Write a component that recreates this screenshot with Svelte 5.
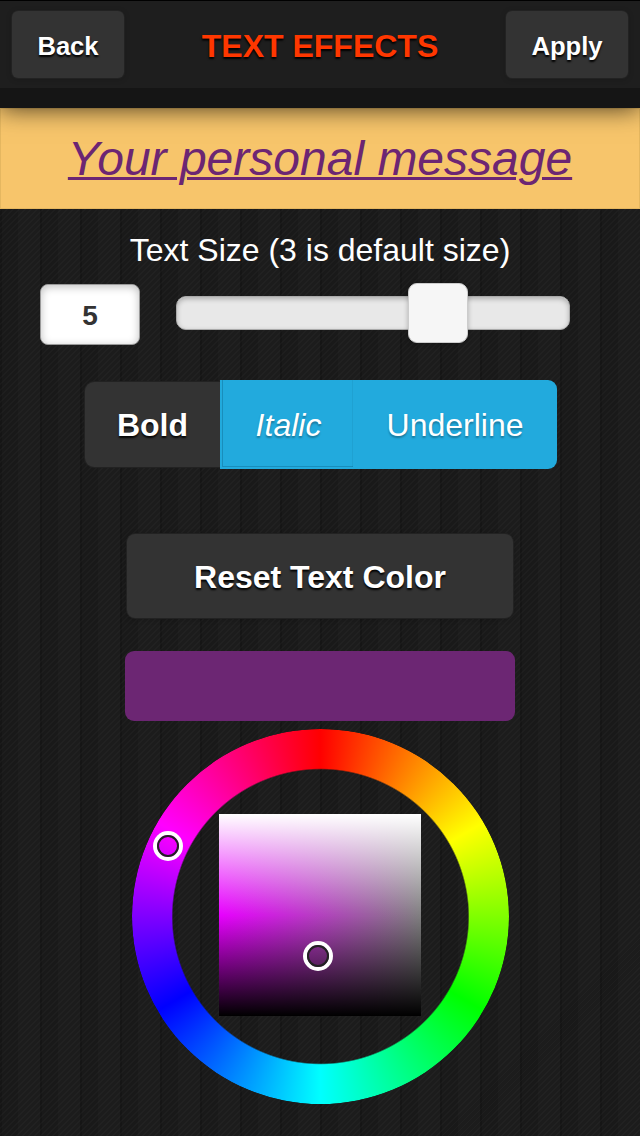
<script>
    let size = $state(5);
    let bold = $state(false);
    let italic = $state(true);
    let underline = $state(true);
    let color = $state('#6c2673');

    const defaultColor = '#ffffff';
    const maxSize = 7;
    const hue = { x: 36, y: 117 };
    const shade = { x: 99, y: 142 };

    // left edge of the 60px handle, the track is 394px wide
    let handleLeft = $derived(((size - 1) / (maxSize - 1)) * 394 - 31.7);
</script>

<div class="page">
    <header>
        <div class="toolbar">
            <button class="btn small">Back</button>
            <h1>TEXT EFFECTS</h1>
            <button class="btn small">Apply</button>
        </div>
    </header>

    <div class="preview">
        <span class:bold class:italic class:underline style="color: {color}">Your personal message</span>
    </div>

    <div class="label">Text Size (3 is default size)</div>
    <div class="size-row">
        <input type="text" bind:value={size} />
        <div class="track">
            <div class="handle" style="left: {handleLeft}px"></div>
        </div>
    </div>

    <div class="group">
        <button class="toggle b" class:active={bold} onclick={() => bold = !bold}>Bold</button>
        <button class="toggle i" class:active={italic} onclick={() => italic = !italic}>Italic</button>
        <button class="toggle u" class:active={underline} onclick={() => underline = !underline}>Underline</button>
    </div>

    <button class="btn reset" onclick={() => color = defaultColor}>Reset Text Color</button>

    <div class="swatch" style="background: {color}"></div>

    <div class="picker">
        <div class="wheel"></div>
        <div class="square">
            <span class="marker" style="left: {shade.x}px; top: {shade.y}px"></span>
        </div>
        <span class="marker" style="left: {hue.x}px; top: {hue.y}px"></span>
    </div>
</div>

<style>
    :global(body) {
        background: #1b1b1b;
    }

    .page {
        width: 640px;
        height: 1136px;
        overflow: hidden;
        display: flex;
        flex-direction: column;
        align-items: center;
        color: #fff;
        font-family: "Liberation Sans", Arial, sans-serif;
        /* pinstripe cloth */
        background:
            repeating-linear-gradient(135deg, rgba(255, 255, 255, 0.025) 0 1.4px, transparent 1.4px 4.24px),
            repeating-linear-gradient(90deg, #151515 0 2px, #191919 2px 18px, #1c1c1c 18px 40px);
    }

    button {
        font-family: inherit;
        border: 0;
        margin: 0;
        padding: 0;
        color: #fff;
    }

    header {
        position: relative;
        flex: none;
        box-sizing: border-box;
        width: 640px;
        height: 108px;
        border-top: 1px solid #000;
        background: #151515;
        box-shadow: 0 0 24px rgba(0, 0, 0, 0.75);
        clip-path: inset(0 0 -40px 0);
    }

    .toolbar {
        display: flex;
        justify-content: space-between;
        align-items: flex-start;
        box-sizing: border-box;
        height: 87px;
        padding: 10px 12px;
        background: #1e1e1e;
    }

    h1 {
        margin: 16px 0 0 10px;
        font-size: 32px;
        line-height: 38px;
        color: #ff3700;
        text-shadow: 0 2px 2px #000;
    }

    .btn {
        font-weight: bold;
        background: #333;
        border-radius: 8px;
        box-shadow: 0 0 0 1px #222, 0 1px 6px rgba(0, 0, 0, 0.2);
        text-shadow: 0 2px 2px #000;
    }

    .small {
        width: 112px;
        height: 67px;
        padding-top: 3px;
        font-size: 25.6px;
        border-radius: 6px;
    }

    .small:last-child {
        width: 122px;
    }

    .preview {
        flex: none;
        box-sizing: border-box;
        width: 640px;
        height: 101px;
        border: 1px solid #e5b760;
        background: #f7c56b;
        text-align: center;
        font-size: 48px;
        line-height: 100px;
    }

    .preview .bold {
        font-weight: bold;
    }

    .preview .italic {
        font-style: italic;
    }

    .preview .underline {
        text-decoration: underline;
        text-decoration-thickness: 3px;
        text-underline-offset: 2px;
    }

    .label {
        margin-top: 22px;
        font-size: 32px;
        line-height: 38px;
    }

    .size-row {
        display: flex;
        align-items: center;
        align-self: flex-start;
        gap: 36px;
        margin: 15px 0 0 40px;
    }

    input {
        box-sizing: border-box;
        width: 100px;
        height: 61px;
        padding: 2px 0 0;
        border: 1px solid #999;
        border-radius: 8px;
        background: #fff;
        box-shadow: inset 0 2px 8px rgba(0, 0, 0, 0.25);
        color: #333;
        text-align: center;
        font: bold 28px "Liberation Sans", Arial, sans-serif;
    }

    .track {
        position: relative;
        box-sizing: border-box;
        width: 394px;
        height: 34px;
        margin-top: -3px;
        border: 1px solid #aaa;
        border-radius: 10px;
        background: #e8e8e8;
        box-shadow: inset 0 2px 5px rgba(0, 0, 0, 0.25);
    }

    .handle {
        position: absolute;
        top: -14px;
        box-sizing: border-box;
        width: 60px;
        height: 60px;
        border: 1px solid #ccc;
        border-radius: 9px;
        background: #f6f6f6;
        box-shadow: 0 1px 5px rgba(0, 0, 0, 0.25);
    }

    .group {
        display: flex;
        align-items: center;
        margin: 35px 0 0 2px;
        height: 89px;
    }

    .toggle {
        box-sizing: border-box;
        height: 85px;
        padding-top: 1px;
        background: #333;
        font-size: 32px;
        text-shadow: 0 2px 2px rgba(0, 0, 0, 0.9);
    }

    .toggle.b {
        width: 135px;
        font-weight: bold;
        border-radius: 9px 0 0 9px;
        box-shadow: 0 0 0 1px #222;
    }

    .toggle.i {
        width: 133px;
        padding-left: 4px;
        font-style: italic;
    }

    .toggle.u {
        width: 204px;
        border-radius: 0 9px 9px 0;
    }

    .toggle.active {
        position: relative;
        height: 89px;
        background: #22aadd;
        text-shadow: 0 2px 2px rgba(0, 0, 0, 0.3);
    }

    .toggle.i.active {
        box-shadow: inset 2px -2px #22aadd, inset 3px -3px rgba(0, 60, 90, 0.25), inset -1px 0 rgba(0, 60, 90, 0.08);
    }

    .reset {
        flex: none;
        width: 386px;
        height: 84px;
        margin-top: 65px;
        padding-top: 2px;
        font-size: 32px;
    }

    .swatch {
        flex: none;
        width: 390px;
        height: 70px;
        margin-top: 33px;
        border-radius: 9px;
    }

    .picker {
        position: relative;
        flex: none;
        display: grid;
        place-items: center;
        width: 377px;
        height: 376px;
        margin: 8px 0 0 1px;
    }

    .picker > .wheel,
    .picker > .square {
        grid-area: 1 / 1;
    }

    .wheel {
        width: 377px;
        height: 375px;
        margin-bottom: 1px;
        border-radius: 50%;
        background: conic-gradient(#f00, #ff0, #0f0, #0ff, #00f, #f0f, #f00);
        mask: radial-gradient(closest-side, transparent 147.5px, #000 149px);
    }

    .square {
        position: relative;
        width: 202px;
        height: 202px;
        margin: -4px 0 0 -1px;
        background:
            linear-gradient(#fff, rgba(255, 255, 255, 0) 50%, rgba(0, 0, 0, 0) 50%, #000),
            linear-gradient(90deg, #e800ff, #808080);
    }

    .marker {
        position: absolute;
        box-sizing: border-box;
        width: 22px;
        height: 22px;
        margin: -11px 0 0 -11px;
        border: 2px solid #222;
        border-radius: 50%;
        box-shadow: 0 0 0 4px #fff;
    }
</style>
